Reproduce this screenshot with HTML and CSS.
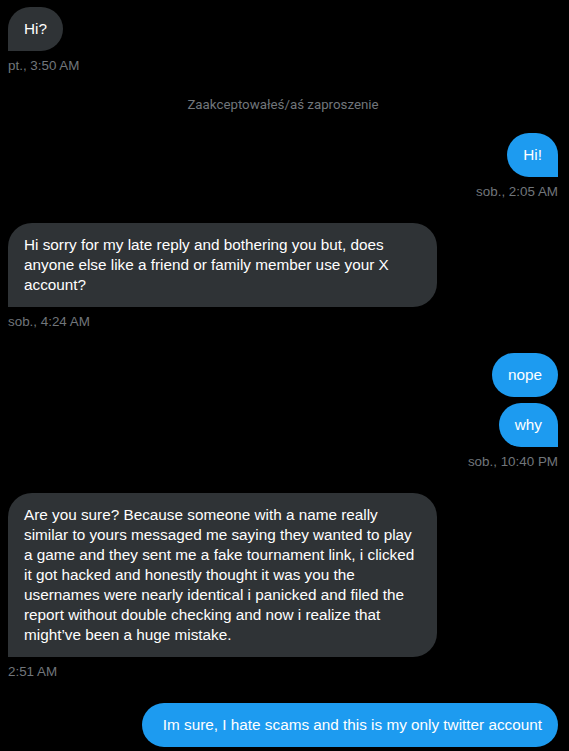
FILE: index.html
```html
<!DOCTYPE html>
<html lang="pl">
<head>
<meta charset="utf-8">
<title>Messages</title>
<link rel="stylesheet" href="styles.css">
</head>
<body>
<div class="chat">
  <div class="group in">
    <div class="bubble dark tail">Hi?</div>
    <div class="time">pt., 3:50 AM</div>
  </div>
  <div class="note">Zaakceptowałeś/aś zaproszenie</div>
  <div class="group out">
    <div class="bubble blue tail">Hi!</div>
    <div class="time">sob., 2:05 AM</div>
  </div>
  <div class="group in">
    <div class="bubble dark tail long">Hi sorry for my late reply and bothering you but, does<br>anyone else like a friend or family member use your X<br>account?</div>
    <div class="time">sob., 4:24 AM</div>
  </div>
  <div class="group out">
    <div class="bubble blue">nope</div>
    <div class="bubble blue tail">why</div>
    <div class="time">sob., 10:40 PM</div>
  </div>
  <div class="group in">
    <div class="bubble dark tail long">Are you sure? Because someone with a name really<br>similar to yours messaged me saying they wanted to play<br>a game and they sent me a fake tournament link, i clicked<br>it got hacked and honestly thought it was you the<br>usernames were nearly identical i panicked and filed the<br>report without double checking and now i realize that<br>might’ve been a huge mistake.</div>
    <div class="time">2:51 AM</div>
  </div>
  <div class="group out">
    <div class="bubble blue wide">Im sure, I hate scams and this is my only twitter account</div>
  </div>
</div>
</body>
</html>
```

FILE: styles.css
```css
html, body {
  margin: 0;
  padding: 0;
  background: #000;
}
body {
  font-family: "Liberation Sans", Arial, sans-serif;
  color: #e7e9ea;
}
.chat {
  display: flex;
  flex-direction: column;
  padding: 7px 11px 0 8px;
}
.group {
  display: flex;
  flex-direction: column;
  gap: 6px;
  margin-bottom: 23px;
}
.group.in { align-items: flex-start; }
.group.out { align-items: flex-end; }
.bubble {
  font-size: 15.3px;
  line-height: 20px;
  padding: 12px 16px;
  border-radius: 24px;
  max-width: 397px;
  color: #fff;
  white-space: nowrap;
}
.bubble.long { width: 397px; }
.bubble.wide { padding: 12px 16px 12px 21px; }
.dark { background: #2f3336; }
.blue { background: #1d9bf0; }
.in .tail { border-bottom-left-radius: 0; }
.out .tail { border-bottom-right-radius: 0; }
.time {
  font-size: 13.4px;
  line-height: 16px;
  color: #71767b;
  margin-top: 1px;
}
.note {
  font-family: Roboto, sans-serif;
  text-align: center;
  font-size: 13.3px;
  line-height: 16px;
  color: #71767b;
  margin: 0 0 20px;
}
```
